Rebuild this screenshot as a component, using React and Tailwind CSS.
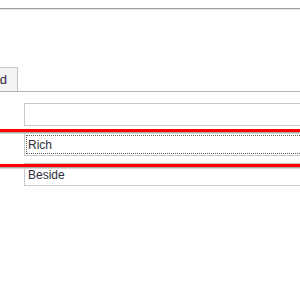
const fields = [
  { value: "", focused: false },
  { value: "Rich", focused: true },
  { value: "Beside", focused: false },
];

function Field({ value, focused }) {
  return (
    <div className="relative h-[23px] w-[290px] border border-[#c8c8c8] bg-white">
      {focused && (
        <div className="absolute inset-[1px] border border-dotted border-[#666]" />
      )}
      <div className="flex h-full items-center pl-[3px] text-[12px] text-[#2e2e3a]">
        {value}
      </div>
    </div>
  );
}

function Highlight({ top }) {
  return (
    <div className="absolute left-0 w-[300px]" style={{ top }}>
      <div className="h-[3px] bg-[#ff0000]" />
      <div className="h-px bg-[#a8a8a8]" />
      <div className="h-px bg-[#d6d6d6]" />
    </div>
  );
}

export default function App() {
  return (
    <div
      className="relative h-[300px] w-[300px] overflow-hidden bg-white"
      style={{ fontFamily: '"Liberation Sans", Arial, sans-serif' }}
    >
      <div className="pt-[8px]">
        <div className="h-px bg-[#a0a0a0]" />
        <div className="h-px bg-[#e4e4e4]" />
      </div>

      <div className="mt-[57px] flex">
        <div className="flex h-[24px] w-[18px] items-center justify-end border-r border-t border-[#c6c6c6] bg-[#f3f3f3] pr-[10px] text-[13px] text-[#2e2e3a]">
          d
        </div>
      </div>
      <div className="h-px bg-[#b4b4b4]" />

      <div className="mt-[11px] flex flex-col gap-[7px] pl-[24px]">
        {fields.map((f, i) => (
          <Field key={i} value={f.value} focused={f.focused} />
        ))}
      </div>

      <Highlight top={129} />
      <Highlight top={164} />
    </div>
  );
}
